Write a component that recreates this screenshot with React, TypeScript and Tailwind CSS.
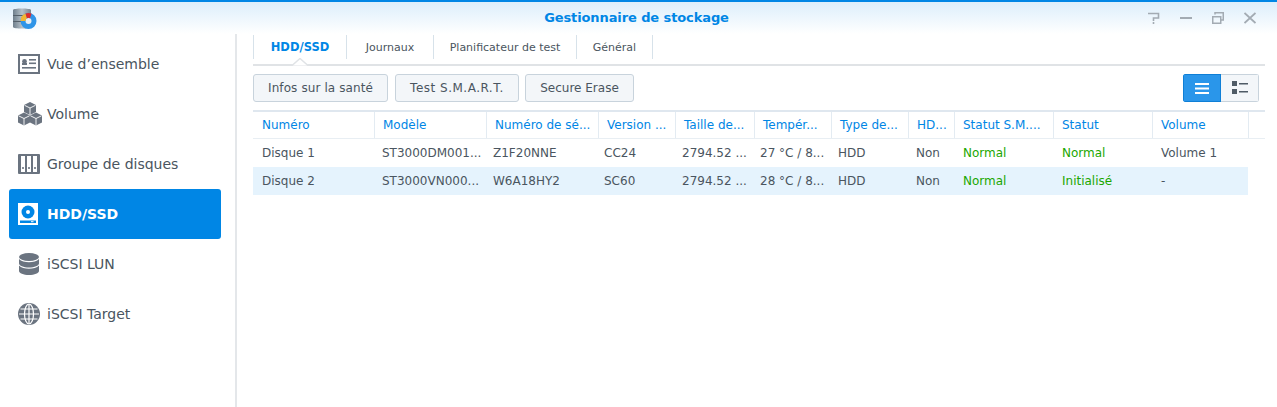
const columns = [
  { label: 'Numéro', width: 'w-[121px]' },
  { label: 'Modèle', width: 'w-[112px]' },
  { label: 'Numéro de sé...', width: 'w-[112px]' },
  { label: 'Version ...', width: 'w-[77px]' },
  { label: 'Taille de...', width: 'w-[79px]' },
  { label: 'Tempér...', width: 'w-[77px]' },
  { label: 'Type de...', width: 'w-[77px]' },
  { label: 'HD...', width: 'w-[46px]' },
  { label: 'Statut S.M....', width: 'w-[99px]' },
  { label: 'Statut', width: 'w-[99px]' },
  { label: 'Volume', width: 'w-[97px]' },
];

// body cells don't line up exactly with the header
const cellWidths = ['w-[120px]', 'w-[111px]', 'w-[111px]', 'w-[78px]', 'w-[78px]', 'w-[78px]', 'w-[78px]', 'w-[47px]', 'w-[99px]', 'w-[99px]', 'w-[87px]'];

const rows = [
  ['Disque 1', 'ST3000DM001...', 'Z1F20NNE', 'CC24', '2794.52 ...', '27 °C / 8...', 'HDD', 'Non', 'Normal', 'Normal', 'Volume 1'],
  ['Disque 2', 'ST3000VN000...', 'W6A18HY2', 'SC60', '2794.52 ...', '28 °C / 8...', 'HDD', 'Non', 'Normal', 'Initialisé', '-'],
];

const gray = '#6b7480';

function OverviewIcon() {
  return (
    <svg width="22" height="20" viewBox="0 0 22 20">
      <rect x="1" y="1" width="20" height="18" fill="none" stroke={gray} strokeWidth="2" />
      <circle cx="6.500" cy="7.500" r="2.400" fill={gray} />
      <rect x="4" y="9" width="5" height="2" fill={gray} />
      <rect x="11" y="5" width="7" height="1.600" fill={gray} />
      <rect x="11" y="8.500" width="7" height="1.600" fill={gray} />
      <rect x="4" y="13" width="14" height="1.600" fill={gray} />
    </svg>
  );
}

function Cube({ x, y }: { x: number; y: number }) {
  return (
    <g transform={`translate(${x} ${y})`}>
      <path d="M6 0l6 3v7l-6 3-6-3V3z" fill={gray} />
      <path d="M.5 3.300L6 6l5.500-2.700M6 6v7" fill="none" stroke="#fff" strokeWidth="0.900" />
    </g>
  );
}

function VolumeIcon() {
  return (
    <svg width="24" height="24" viewBox="0 0 24 24">
      <Cube x={6} y={0} />
      <Cube x={0} y={10.500} />
      <Cube x={12} y={10.500} />
    </svg>
  );
}

function GroupIcon() {
  return (
    <svg width="22" height="20" viewBox="0 0 22 20">
      <rect width="22" height="20" rx="1" fill={gray} />
      <rect x="3" y="2" width="4" height="16" fill="#fff" />
      <rect x="9" y="2" width="4" height="16" fill="#fff" />
      <rect x="15" y="2" width="4" height="16" fill="#fff" />
      <rect x="4.200" y="13" width="1.600" height="2" fill={gray} />
      <rect x="10.200" y="13" width="1.600" height="2" fill={gray} />
      <rect x="16.200" y="13" width="1.600" height="2" fill={gray} />
    </svg>
  );
}

function DiskIcon() {
  return (
    <svg width="20" height="22" viewBox="0 0 20 22">
      <rect width="20" height="22" fill="#fff" />
      <circle cx="10" cy="9" r="6.500" fill="#0086e5" />
      <circle cx="10" cy="9" r="2" fill="#fff" />
      <rect x="2" y="17.500" width="16" height="2.500" fill="#0086e5" />
      <rect x="13" y="18.200" width="2.500" height="1" fill="#fff" />
    </svg>
  );
}

function LunIcon() {
  return (
    <svg width="20" height="22" viewBox="0 0 20 22" fill={gray}>
      <ellipse cx="10" cy="4" rx="10" ry="4" />
      <path d="M0 6c2 2.500 6 3.200 10 3.200S18 8.500 20 6v4.500c0 2.200-4.500 4-10 4s-10-1.800-10-4z" />
      <path d="M0 12.500c2 2.500 6 3.200 10 3.200s8-.7 10-3.200V18c0 2.200-4.500 4-10 4S0 20.200 0 18z" />
    </svg>
  );
}

function GlobeIcon() {
  return (
    <svg width="22" height="22" viewBox="0 0 22 22">
      <circle cx="11" cy="11" r="11" fill={gray} />
      <g fill="none" stroke="#fff" strokeWidth="1.200">
        <ellipse cx="11" cy="11" rx="4.500" ry="10" />
        <path d="M11 1v20M1 11h20M2.500 6h17M2.500 16h17" />
      </g>
    </svg>
  );
}

function AppLogo() {
  return (
    <svg width="24" height="22" viewBox="0 0 24 22">
      <defs>
        <linearGradient id="db" x1="0" x2="1" y1="0" y2="0">
          <stop offset="0" stopColor="#6f7f8c" />
          <stop offset="0.500" stopColor="#b5c0c8" />
          <stop offset="1" stopColor="#76858f" />
        </linearGradient>
      </defs>
      <path d="M0 2c0-2 18-2 18 0v17c0 2-18 2-18 0z" fill="url(#db)" />
      <rect y="7" width="18" height="1" fill="#55606a" />
      <rect y="13" width="18" height="1" fill="#55606a" />
      <circle cx="15.500" cy="13" r="5.500" fill="#e8eef3" />
      <circle cx="15.500" cy="13" r="5.500" fill="none" stroke="#2f95e8" strokeWidth="5" />
      <path d="M7.500 13a8 8 0 0 1 5-7.400l1.500 4.800A3 3 0 0 0 12.500 13z" fill="#f2b632" />
      <path d="M12.500 5.600a8 8 0 0 1 6 0l-1.500 4.700a3 3 0 0 0-3 0z" fill="#e02b2b" />
    </svg>
  );
}

const sideItems = [
  { label: 'Vue d’ensemble', icon: <OverviewIcon /> },
  { label: 'Volume', icon: <VolumeIcon /> },
  { label: 'Groupe de disques', icon: <GroupIcon /> },
  { label: 'HDD/SSD', icon: <DiskIcon />, active: true },
  { label: 'iSCSI LUN', icon: <LunIcon />, iconClass: 'pl-px' },
  { label: 'iSCSI Target', icon: <GlobeIcon /> },
];

const tabs = [
  { label: 'Journaux', width: 'w-[87px]' },
  { label: 'Planificateur de test', width: 'w-[143px]' },
  { label: 'Général', width: 'w-[76px]' },
];

export default function App() {
  return (
    <div className="h-[407px] w-[1277px] overflow-hidden bg-white font-['DejaVu_Sans',sans-serif] text-[#4a5560]">
      <div className="relative flex h-[34px] items-center justify-center border-t-2 border-[#0086e5] bg-gradient-to-b from-[#dceefb] to-white pr-[4px]">
        <div className="absolute left-[13px] top-[6px]">
          <AppLogo />
        </div>
        <span className="text-[13px] font-bold tracking-[-0.1px] text-[#0086e5]">Gestionnaire de stockage</span>
        <div className="absolute right-[21px] top-[10px] flex items-center gap-[20px] text-[#a3abb3]">
          <svg width="12" height="12" viewBox="0 0 12 12" fill="none" stroke="currentColor" strokeWidth="1.600"><path d="M0 1.500h10.500v4.500H5.500v3" /><path d="M5.500 10v2" /></svg>
          <svg width="12" height="12" viewBox="0 0 12 12"><rect y="5" width="12" height="2" fill="currentColor" /></svg>
          <svg width="12" height="12" viewBox="0 0 12 12" fill="none" stroke="currentColor" strokeWidth="1.500"><rect x="0.750" y="4.750" width="8" height="6.500" /><path d="M3 2.500V.75h8.250V8H9" /></svg>
          <svg width="12" height="12" viewBox="0 0 12 12" stroke="currentColor" strokeWidth="1.800"><path d="M.5 1l11 10M11.500 1L.5 11" /></svg>
        </div>
      </div>

      <div className="flex h-[373px]">
        <aside className="w-[237px] shrink-0 border-r-2 border-[#e4e7ea] pl-[9px] pr-[14px] pt-[5px]">
          {sideItems.map((item) => (
            <div
              key={item.label}
              className={`flex h-[50px] items-center rounded-[3px] pl-[9px] text-[14px] ${item.active ? 'bg-[#0086e5] font-bold text-white' : ''}`}
            >
              <span className={`flex w-[29px] justify-start ${item.iconClass ?? ''}`}>{item.icon}</span>
              {item.label}
            </div>
          ))}
        </aside>

        <main className="flex-1 pl-[16px] pr-[12px] pt-px">
          <div className="relative flex h-[31px] border-b-2 border-[#e0e3e6] text-[11px]">
            <div className="flex h-[24px] w-[94px] items-center justify-center border-x border-[#d7e2ea] pt-[2px] text-[11.500px] font-bold text-[#0086e5]">HDD/SSD</div>
            {tabs.map((t) => (
              <div key={t.label} className={`flex h-[24px] items-center justify-center border-r border-[#d7e2ea] pt-[2px] ${t.width}`}>{t.label}</div>
            ))}
            <svg className="absolute left-[37px] top-[23px]" width="20" height="8" viewBox="0 0 20 8">
              <path d="M0 7.500h2L10 .5l8 7h2" fill="#fff" stroke="#e0e3e6" strokeWidth="1.500" />
            </svg>
          </div>

          <div className="mt-[8px] flex items-center text-[12px]">
            <button className="h-[28px] w-[135px] rounded-[3px] border border-[#c8d3dc] bg-[#f3f6f9] tracking-[0.1px]">Infos sur la santé</button>
            <button className="ml-[7px] h-[28px] w-[124px] rounded-[3px] border border-[#c8d3dc] bg-[#f3f6f9] tracking-[0.5px]">Test S.M.A.R.T.</button>
            <button className="ml-[6px] h-[28px] w-[109px] rounded-[3px] border border-[#c8d3dc] bg-[#f3f6f9]">Secure Erase</button>
            <div className="ml-auto mr-[6px] flex h-[28px] overflow-hidden rounded-[3px]">
              <div className="flex w-[38px] items-center justify-center border border-[#0f7fd6] bg-[#2a96ea]">
                <svg width="14" height="11" viewBox="0 0 14 11" fill="#fff"><rect width="14" height="2" /><rect y="4.500" width="14" height="2" /><rect y="9" width="14" height="2" /></svg>
              </div>
              <div className="flex w-[38px] items-center justify-center border border-l-0 border-[#c8d3dc] bg-[#f3f6f9]">
                <svg width="16" height="14" viewBox="0 0 16 14" fill="#4f5b66"><rect width="5" height="5" /><rect y="8" width="5" height="5" /><rect x="7" y="2" width="9" height="1.500" /><rect x="7" y="10" width="9" height="1.500" /></svg>
              </div>
            </div>
          </div>

          <div className="mt-[8px] border-t-2 border-[#dfe7ef] text-[12px]">
            <div className="flex h-[27px] border-b border-[#e8eef3] text-[#0086e5]">
              {columns.map((c, i) => (
                <div
                  key={c.label}
                  className={`${c.width} flex items-center whitespace-nowrap ${i === 0 ? 'pl-[9px]' : 'border-l border-[#e3ebf2] pl-[8px]'} ${i === 10 ? 'border-r' : ''}`}
                >
                  {c.label}
                </div>
              ))}
            </div>
            {rows.map((row, i) => (
              <div key={row[0]} className={`flex h-[28px] w-[995px] items-center ${i === 1 ? 'bg-[#e5f3fd]' : ''}`}>
                {row.map((v, j) => (
                  <div key={j} className={`${cellWidths[j]} whitespace-nowrap pl-[9px] ${j === 8 || j === 9 ? 'text-[#1ba700]' : ''}`}>{v}</div>
                ))}
              </div>
            ))}
          </div>
        </main>
      </div>
    </div>
  );
}
